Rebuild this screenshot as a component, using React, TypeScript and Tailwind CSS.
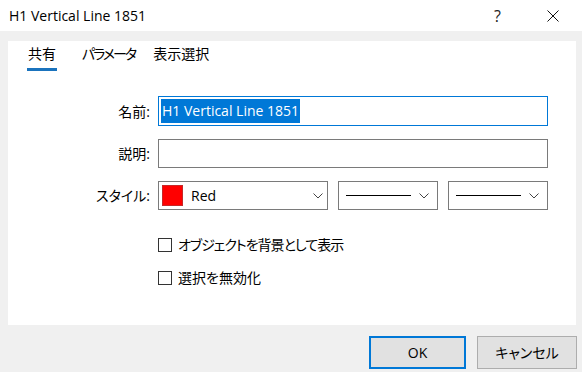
import React from 'react'

const font = { fontFamily: '"Open Sans", "Noto Sans CJK JP", sans-serif', fontFeatureSettings: '"palt"' }

function Chevron() {
  return (
    <svg width="10" height="6" viewBox="0 0 10 6" className="shrink-0">
      <path d="M0.5 0.5 L5 5 L9.5 0.5" fill="none" stroke="#444" strokeWidth="1" />
    </svg>
  )
}

function LineCombo() {
  return (
    <div className="flex h-[29px] w-[100px] items-center border border-[#7a7a7a] bg-white pl-[7px] pr-[8px]">
      <div className="h-[1.5px] w-[65px] bg-black" />
      <div className="flex-1" />
      <Chevron />
    </div>
  )
}

function Check({ label, tight }: { label: string; tight?: boolean }) {
  return (
    <label className="flex items-center gap-[6px] text-[14px] text-black">
      <span className="h-[14px] w-[14px] border border-[#333] bg-white" />
      <span className={tight ? 'tracking-[-1px]' : ''}>{label}</span>
    </label>
  )
}

export default function App() {
  return (
    <div className="flex h-[372px] w-[582px] flex-col bg-[#f0f0f0] text-black" style={font}>
      <div className="flex h-[31px] items-center bg-white pl-[9px]">
        <span className="text-[14px]">H1 Vertical Line 1851</span>
        <div className="flex-1" />
        <span className="mr-[46px] text-[16px] text-[#222]">?</span>
        <svg width="12" height="12" viewBox="0 0 12 12" className="mr-[23px]">
          <path d="M0.5 0.5 L11.5 11.5 M11.5 0.5 L0.5 11.5" stroke="#111" strokeWidth="1" />
        </svg>
      </div>

      <div className="ml-[8px] mr-[6px] mt-[10px] flex h-[284px] flex-col bg-white">
        <div className="flex gap-[25px] pl-[19px] pt-[2px] text-[14px]">
          <div className="flex flex-col items-center">
            <span className="leading-[22px]">共有</span>
            <span className="mt-[3px] h-[3px] w-[30px] bg-[#1a73bd]" />
          </div>
          <span className="leading-[22px] tracking-[-2px]">パラメータ</span>
          <span className="-ml-[7px] leading-[22px]">表示選択</span>
        </div>

        <div className="mt-[25px] grid grid-cols-[142px_390px] items-center gap-x-[8px] gap-y-[13px] text-[14px]">
          <span className="text-right">名前:</span>
          <div className="flex h-[30px] items-center border border-[#0078d7] bg-white pl-[2px]">
            <span className="bg-[#0078d7] px-[1px] text-[14px] leading-[24px] text-white">H1 Vertical Line 1851</span>
          </div>

          <span className="text-right">説明:</span>
          <div className="h-[29px] border border-[#7a7a7a] bg-white" />

          <span className="text-right">スタイル:</span>
          <div className="flex gap-[10px]">
            <div className="flex h-[29px] w-[170px] items-center border border-[#7a7a7a] bg-white pl-[3px] pr-[4px]">
              <span className="h-[21px] w-[21px] border border-[#c62828] bg-[#ff0000]" />
              <span className="ml-[8px] text-[14px]">Red</span>
              <div className="flex-1" />
              <Chevron />
            </div>
            <LineCombo />
            <LineCombo />
          </div>
        </div>

        <div className="ml-[150px] mt-[24px] flex flex-col gap-[12px]">
          <Check label="オブジェクトを背景として表示" tight />
          <Check label="選択を無効化" />
        </div>
      </div>

      <div className="mt-[11px] flex justify-end gap-[11px] pr-[5px] text-[14px]">
        <button type="button" className="h-[33px] w-[97px] border-2 border-[#0078d7] bg-[#e1e1e1]">
          OK
        </button>
        <button type="button" className="h-[33px] w-[100px] border border-[#adadad] bg-[#e1e1e1]">
          キャンセル
        </button>
      </div>
    </div>
  )
}
